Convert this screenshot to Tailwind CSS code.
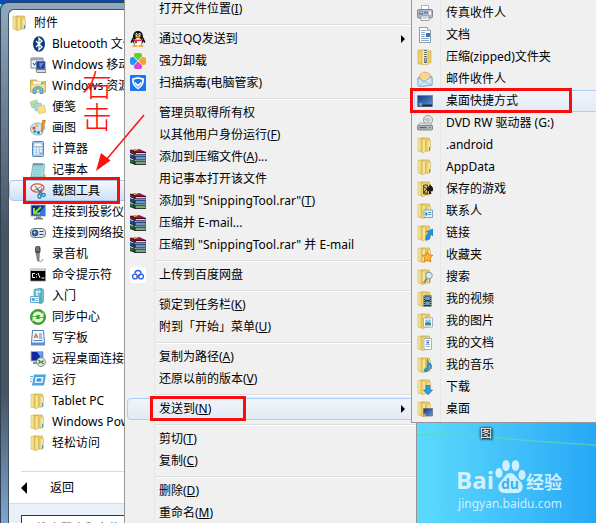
<!DOCTYPE html>
<html lang="zh-CN">
  <head>
    <meta charset="UTF-8" />
    <meta name="viewport" content="width=device-width, initial-scale=1.0" />
    <title>发送到桌面快捷方式</title>
    <script src="https://cdn.jsdelivr.net/npm/@tailwindcss/browser@4"></script>
  </head>
  <body
    class="relative h-screen overflow-hidden bg-linear-to-r from-[#5cdafc] from-70% to-[#25a8f6] font-['Noto_Sans','Noto_Sans_CJK_SC',sans-serif] text-xs text-black"
  >
    <!-- Shared icons -->
    <svg class="absolute size-0" aria-hidden="true">
      <defs>
        <linearGradient id="gold" x1="0" x2="1">
          <stop offset="0" stop-color="#fdf3b0" />
          <stop offset="1" stop-color="#d9b64c" />
        </linearGradient>
        <linearGradient id="screen" x1="0" x2="1" y2="1">
          <stop offset="0" stop-color="#16347e" />
          <stop offset="1" stop-color="#5a9be0" />
        </linearGradient>
      </defs>

      <symbol id="folder" viewBox="0 0 16 16">
        <path d="M4 1h8.5v13H4z" fill="#e9cf72" stroke="#cda944" stroke-width=".6" />
        <path d="M10 3l3.500.5V13L10 14z" fill="#f3e3a0" stroke="#cda944" stroke-width=".5" />
        <path d="M1 1.500l5-.5v14l-5-1z" fill="url(#gold)" stroke="#d2ae49" stroke-width=".6" />
        <path d="M5 2.500L8.500 1v13.500L5 16z" fill="#f6e391" stroke="#cda944" stroke-width=".6" />
        <path d="M12.500 10v3.500" stroke="#3f9fd8" stroke-width="1" />
      </symbol>
      <symbol id="bluetooth" viewBox="0 0 16 16">
        <ellipse cx="9" cy="8" rx="6" ry="7.800" fill="#0a3a7a" />
        <path d="M6 5l6 6-3 2.700V2.300L12 5l-6 6" fill="none" stroke="#fff" stroke-width="1.300" />
      </symbol>
      <symbol id="mobility" viewBox="0 0 16 16">
        <path d="M1 1h12v10H1z" fill="#f4f8fc" stroke="#728396" />
        <path d="M1 1h12v2.500H1z" fill="#93a8bd" />
        <path d="M3 6l1.500 2L7 4.500" fill="none" stroke="#2574b8" stroke-width="1.200" />
        <path d="M6.500 4.500h8.500v7.500H6.500z" fill="#1e3fa5" stroke="#6c7580" />
        <path d="M9 6h5l-4 5z" fill="#5f8fe8" />
        <path d="M6 12.500h9.500l.5 3H7z" fill="#d5d8dc" stroke="#555" stroke-width=".7" />
      </symbol>
      <symbol id="explorer" viewBox="0 0 16 16">
        <path d="M.5 2h6l1 1.500h8V14H.5z" fill="#e8c45c" stroke="#b79434" stroke-width=".7" />
        <path d="M3 3.500h10V7H3z" fill="#fff" />
        <path d="M11 4.200h2v2h-2z" fill="#55a855" />
        <path d="M.5 6h15l-.5 8H1z" fill="#f5e08e" stroke="#cfae50" stroke-width=".5" />
        <path d="M3 15.500V11q5-5 10 0v4.500h-3v-4q-2-2-4 0v4z" fill="#69bfe8" stroke="#2d84ba" stroke-width=".7" />
      </symbol>
      <symbol id="notes" viewBox="0 0 16 16">
        <path d="M0 3l7-2 2 6-7 2z" fill="#b9e08c" stroke="#8bbd60" stroke-width=".5" />
        <path d="M4 5l7-1 1 7-7 1z" fill="#a9d5f2" stroke="#6faedb" stroke-width=".5" />
        <path d="M7 7.500l7-1.500 2 7-7 2z" fill="#f6e287" stroke="#cfae45" stroke-width=".5" />
      </symbol>
      <symbol id="paint" viewBox="0 0 16 16">
        <path d="M8 3C3 3 .5 6 .5 9S3 15 8 15s5-2 4.500-3.500S15 10 15 8s-3-5-7-5z" fill="#cfe3f4" stroke="#5b8fb9" stroke-width=".7" />
        <circle cx="4" cy="8" r="1.600" fill="#e23e2e" />
        <circle cx="7" cy="5.500" r="1.500" fill="#f4b92c" />
        <circle cx="4.800" cy="11.500" r="1.500" fill="#3aa443" />
        <circle cx="8.500" cy="12.500" r="1.500" fill="#2c6fd0" />
        <path d="M12.500 0h3l-3 12-1.500-.5z" fill="#e59428" stroke="#9e5d13" stroke-width=".4" />
      </symbol>
      <symbol id="calc" viewBox="0 0 16 16">
        <rect x="2.500" y=".5" width="11" height="15" rx="1" fill="#a9cdee" stroke="#5487b8" />
        <path d="M4 2h8v3.500H4z" fill="#f3faff" stroke="#6a9ac8" stroke-width=".5" />
        <path d="M4 7.500h8M4 10h8M4 12.500h8" stroke="#fff" stroke-width="1.500" stroke-dasharray="1.700 1.300" />
        <path d="M10 12.500h2" stroke="#e28c2f" stroke-width="1.500" />
      </symbol>
      <symbol id="notepad" viewBox="0 0 16 16">
        <path d="M3 2h11.500l-1 13H1z" fill="#a6dbe2" stroke="#5f9ea8" stroke-width=".7" />
        <path d="M4 5h8M4 7.500h8M3.500 10h8M3 12.500h8" stroke="#7ebdc6" stroke-width=".7" />
        <path d="M4 1v2.500M6 1v2.500M8 1v2.500M10 1v2.500M12 1v2.500" stroke="#54646c" />
        <path d="M12.500 15.500l3-4v4z" fill="#d9b03c" />
      </symbol>
      <symbol id="snip" viewBox="0 0 16 16">
        <ellipse cx="7.500" cy="5" rx="6.500" ry="4.200" fill="#fff5f0" stroke="#cf5a3a" stroke-width="1.300" />
        <path d="M3 8l9-5M5 3l5 7" stroke="#8e9aa5" stroke-width="1.300" />
        <path d="M7 6l6 5M12 5l-3 7" stroke="#5c6d7c" stroke-width="1.200" />
        <ellipse cx="9.500" cy="13" rx="1.500" ry="2.200" fill="none" stroke="#2380b5" stroke-width="1.300" />
        <ellipse cx="13.500" cy="12" rx="1.800" ry="1.500" fill="none" stroke="#2380b5" stroke-width="1.300" />
      </symbol>
      <symbol id="projector" viewBox="0 0 16 16">
        <path d="M1 1h14.500v11H1z" fill="#14259c" stroke="#a9afb5" />
        <path d="M15 1.500v10H7z" fill="#3975e0" />
        <path d="M11 3L5 8.500M4 4v5.500h6" fill="none" stroke="#7fe03d" stroke-width="2" />
        <path d="M6 12.500h5v1.500h2v1.500H4V14h2z" fill="#777e85" />
      </symbol>
      <symbol id="netprojector" viewBox="0 0 16 16">
        <rect x=".5" y="3.500" width="15" height="9" rx="3.500" fill="#dfe5ea" stroke="#6f7b87" />
        <circle cx="5" cy="8" r="3" fill="#2e6bb0" stroke="#27384a" stroke-width=".8" />
        <circle cx="4.500" cy="7.500" r="1" fill="#c9ecff" />
        <path d="M9.500 6.500h4M9.500 9.500h4" stroke="#334a60" stroke-width="1.200" />
      </symbol>
      <symbol id="mic" viewBox="0 0 16 16">
        <rect x="5" y="0" width="5.500" height="7.500" rx="2.300" fill="#4b4f53" />
        <path d="M6 2h3M6 4h3" stroke="#aaafb4" stroke-width=".8" />
        <path d="M6 7.500h3.500L9 15H7.500z" fill="#868d93" stroke="#444" stroke-width=".4" />
        <path d="M8.500 15q4 1.500 4.500-2" fill="none" stroke="#888" stroke-width=".9" />
      </symbol>
      <symbol id="cmd" viewBox="0 0 16 16">
        <path d="M.5 2h15v12H.5z" fill="#000" stroke="#8b8f93" stroke-width=".8" />
        <path d="M.5 2h15v2H.5z" fill="#c8cdd2" />
        <path d="M5 6.500H2.500v4H5M6.500 7v1M6.500 9.500v1M8 6l2 5M11.500 11h3" fill="none" stroke="#fff" />
      </symbol>
      <symbol id="started" viewBox="0 0 16 16">
        <path d="M4 1.500L11 0l2.500 1.500V14L11 15.500 4 14z" fill="#70c2cf" stroke="#3791a4" stroke-width=".6" />
        <path d="M11 .7v14.600" stroke="#2f8496" stroke-width=".7" />
        <path d="M6 3h2v2H6zM8.500 2.700h2v2h-2zM6 5.500h2v2H6z" fill="#dff6fa" />
        <path d="M.5 8.500h9v6h-9z" fill="#eef8fd" stroke="#4b97c2" stroke-width=".8" />
        <path d="M2 10.500h2.500v2H2zM5.500 10.500h3M5.500 12.500h3" fill="#4ea5d8" stroke="#4ea5d8" stroke-width=".7" />
      </symbol>
      <symbol id="sync" viewBox="0 0 16 16">
        <circle cx="8" cy="8" r="7.600" fill="#3aa53c" stroke="#1f7f28" stroke-width=".7" />
        <path d="M2.500 7q1-4.500 5.500-4.500 2.500 0 4 2l1.500-1V8H9l1.500-1.500Q8 4.500 5 7.500zM13.500 9q-1 4.500-5.500 4.500-2.500 0-4-2l-1.500 1V8H7L5.500 9.500Q8 11.500 11 8.500z" fill="#e4f9c4" />
      </symbol>
      <symbol id="wordpad" viewBox="0 0 16 16">
        <path d="M2.500.5h11l1 12.500h-13z" fill="#f3f9ff" stroke="#4b80b8" />
        <path d="M1 13h14v2.500H1z" fill="#5b90c6" />
        <path d="M4 8l2-4 2 4M4.800 7h2.500" fill="none" stroke="#e06a2b" stroke-width="1.200" />
        <path d="M9 4h3M9 6h3M9 8h3.500M3.500 10.500h9" stroke="#3f75b0" stroke-width=".9" />
      </symbol>
      <symbol id="rdp" viewBox="0 0 16 16">
        <path d="M1 .5h12v9.500H1z" fill="#1228a0" stroke="#aab0b6" />
        <path d="M7 1h5.500v8z" fill="#6a9af0" />
        <path d="M3 11h5v2H3z" fill="#868c92" />
        <circle cx="11" cy="11" r="4.500" fill="#dfe5df" stroke="#6d7a70" stroke-width=".8" />
        <path d="M8.500 9l2 1.800-2 1.800M13.500 9.500l-2 1.800 2 1.800" fill="none" stroke="#2a8a2f" stroke-width="1.200" />
      </symbol>
      <symbol id="run" viewBox="0 0 16 16">
        <path d="M4 2.500h12l-2 11H2z" fill="#4aa3e2" />
        <path d="M5.500 5h8l-1 6h-8z" fill="#dff1fd" />
        <path d="M7 6.500h4.500l-.5 3H6.500z" fill="#3c8fd3" />
        <path d="M0 4.500h3M0 7h2.500M0 9.500h2" stroke="#69b8ea" />
      </symbol>

      <symbol id="qq" viewBox="0 0 16 16">
        <path d="M3 6C3 2 5 0 8 0s5 2 5 6l2.500 5-1 1-1.500-1.500q-.5 4-5 4t-5-4L1.500 12l-1-1z" fill="#111" />
        <ellipse cx="8" cy="11" rx="3.800" ry="4" fill="#fff" />
        <ellipse cx="6.500" cy="3.500" rx="1.100" ry="1.500" fill="#fff" />
        <ellipse cx="9.500" cy="3.500" rx="1.100" ry="1.500" fill="#fff" />
        <circle cx="6.800" cy="3.700" r=".5" /><circle cx="9.200" cy="3.700" r=".5" />
        <ellipse cx="8" cy="5.800" rx="2.800" ry="1" fill="#f7a51c" />
        <path d="M3 7.500q5 2.500 10 0v1.800q-3 1.200-6 1v2H4.800V9.800L3 9z" fill="#e5252a" />
        <ellipse cx="5" cy="15" rx="2.800" ry="1" fill="#f4a21a" />
        <ellipse cx="11" cy="15" rx="2.800" ry="1" fill="#f4a21a" />
      </symbol>
      <symbol id="clover" viewBox="0 0 16 16">
        <path d="M8 7.500L4 3.500Q3.500 0 6 0h4q2.500 0 2 3.500z" fill="#67cf2c" />
        <path d="M8.500 8l4-4Q16 3.500 16 6v4q0 2.500-3.500 2z" fill="#f7a326" />
        <path d="M8 8.500l4 4q.5 3.500-2 3.500H6q-2.500 0-2-3.500z" fill="#d845d5" />
        <path d="M7.500 8l-4-4Q0 3.500 0 6v4q0 2.500 3.500 2z" fill="#2b94f2" />
      </symbol>
      <symbol id="shield" viewBox="0 0 16 16">
        <rect width="16" height="16" rx="1" fill="#1d74f2" />
        <path d="M8 2l6 1.500q.5 7-6 11-6.500-4-6-11z" fill="#fff" />
        <path d="M8 3.800l4.300 1q0 5-4.300 8-4.300-3-4.300-8z" fill="#1d74f2" />
        <path d="M4.500 6.500L8 9.500l3.500-3v2L8 12 4.500 8.500z" fill="#fff" />
      </symbol>
      <symbol id="rar" viewBox="0 0 16 16">
        <path d="M0 1L9 0l7 3v2.500H6L0 3.500z" fill="#8e1550" />
        <path d="M0 1l6 2.500h10" fill="none" stroke="#4a0625" />
        <path d="M6 4h9.500v1H6z" fill="#f3c3d8" />
        <path d="M0 5l6 2h10v3.500H6L0 8.500z" fill="#16509c" />
        <path d="M6 8.500h9.500v1H6z" fill="#b5def5" />
        <path d="M0 10l6 2h10v3.500H6L0 13.500z" fill="#13703e" />
        <path d="M6 13.500h9.500v1H6z" fill="#c5eccb" />
        <path d="M0 3.500L6 6h10M0 8.500L6 11h10M0 13.500l6 2.200h10" fill="none" stroke="#111" stroke-width=".9" />
        <path d="M3 1l2 .7v14L3 15z" fill="#33252a" fill-opacity=".6" />
        <path d="M4 1.500l4-1" stroke="#f2d32d" />
      </symbol>
      <symbol id="netdisk" viewBox="0 0 16 16">
        <rect width="16" height="16" rx="3" fill="#fff" />
        <circle cx="5" cy="9.500" r="2.400" fill="none" stroke="#2468f2" stroke-width="1.400" />
        <circle cx="11" cy="9.500" r="2.400" fill="none" stroke="#2468f2" stroke-width="1.400" />
        <path d="M5 6.500Q5 3.500 8 3.500t3 3Q11 8 8 9.500" fill="none" stroke="#2468f2" stroke-width="1.400" />
        <circle cx="7.500" cy="9.500" r="1" fill="#ef3b3b" />
      </symbol>

      <symbol id="fax" viewBox="0 0 16 16">
        <path d="M4.500.5h7v5h-7z" fill="#fff" stroke="#8f969c" stroke-width=".7" />
        <rect x=".5" y="4.500" width="15" height="8.500" rx="1.500" fill="#b7bdc3" stroke="#686f76" stroke-width=".8" />
        <path d="M2 6.500h4v3H2z" fill="#59616a" />
        <path d="M7 6.500h4v2H7z" fill="#3c8fd6" />
        <path d="M12 6.500h2v3h-2z" fill="#f6f8fa" />
        <path d="M2 7.500h4M4 6.500v3" stroke="#dfe4e8" stroke-width=".6" />
        <path d="M4 11h8v4.500H4z" fill="#fff" stroke="#7c838a" stroke-width=".7" />
        <path d="M5.500 13h5" stroke="#8aa9c6" />
      </symbol>
      <symbol id="doc" viewBox="0 0 16 16">
        <path d="M2.500.5h8l3 3v12h-11z" fill="#fff" stroke="#8292a2" stroke-width=".9" />
        <path d="M10.500.5v3h3" fill="#dce5ee" stroke="#8292a2" stroke-width=".7" />
        <path d="M4 3.500h5M4 5.500h4M4 7.500h4M4 9.500h4M4 11.500h8M4 13.500h8" stroke="#6f95be" stroke-width=".8" />
        <path d="M9 6h4v4H9z" fill="#2b7cc8" />
      </symbol>
      <symbol id="zip" viewBox="0 0 16 16">
        <path d="M1 1h5v14H1zM10 2h4v12h-4z" fill="#ecd06a" stroke="#c9a43c" stroke-width=".6" />
        <path d="M5 1h6v14.500H5z" fill="#f9eda8" stroke="#c9a43c" stroke-width=".6" />
        <path d="M8.500 1v13" stroke="#4f5963" stroke-width="2.500" stroke-dasharray="1 1" />
        <path d="M7.500 9h2v4h-2z" fill="#a8b0b8" stroke="#4f5963" stroke-width=".5" />
      </symbol>
      <symbol id="mail" viewBox="0 0 16 16">
        <path d="M1 7l7-6 7 5v8l-12 1.500-2-1z" fill="#8bc5ea" stroke="#5a97c2" stroke-width=".7" />
        <path d="M3 3q6-3.500 10 0v6l-6 2-4-3z" fill="#fbd595" stroke="#e2a24a" stroke-width=".6" />
        <path d="M1 7l6 3.500L15 6v8L2.500 15.500 1 14z" fill="#cfe9f9" stroke="#6ea7cf" stroke-width=".7" />
        <path d="M2 15l5-4.500L15 14" fill="none" stroke="#78afd4" stroke-width=".7" />
      </symbol>
      <symbol id="desktop" viewBox="0 0 16 16">
        <path d="M.5 2.500h15v11H.5z" fill="url(#screen)" stroke="#7b8794" stroke-width=".9" />
        <path d="M1 11.500h14v2H1z" fill="#262b35" />
        <circle cx="3.500" cy="11.500" r="2" fill="#3f9ae6" />
        <path d="M3 10.500h1v1H3z" fill="#f5b03d" />
      </symbol>
      <symbol id="dvd" viewBox="0 0 16 16">
        <circle cx="11" cy="5" r="4.600" fill="#dfe3e5" stroke="#8b9196" stroke-width=".8" />
        <circle cx="11" cy="5" r="1.300" fill="#fff" stroke="#777" stroke-width=".6" />
        <path d="M6.500 4.500l3-.5" stroke="#9bc79a" />
        <path d="M2.500 8h11l2 3H.5z" fill="#d7dadd" fill-opacity=".85" stroke="#878d92" stroke-width=".6" />
        <rect x=".5" y="10.500" width="15" height="4.500" rx="1" fill="#b1b6ba" stroke="#6d7378" stroke-width=".8" />
        <path d="M2.500 12.700h7" stroke="#474c51" />
        <path d="M12 12.700h2" stroke="#39c239" stroke-width="1.300" />
      </symbol>

      <!-- Badges drawn over the folder -->
      <symbol id="b-games" viewBox="0 0 16 16">
        <path d="M6.500 4h4v9h-4z" fill="#d8b878" stroke="#3b2b18" stroke-width=".8" />
        <path d="M7 6l3 2-3 3 3 2" fill="none" stroke="#3b2b18" />
        <path d="M13 3.500q4 3.500 3 6-1 1.500-2.300.5l.8 3h-3l.8-3Q10.500 11 10 9q0-2 3-5.500z" fill="#1d1a18" />
      </symbol>
      <symbol id="b-contact" viewBox="0 0 16 16">
        <path d="M7 7h8.500v7.500H7z" fill="#e4f3fc" stroke="#5f93ba" stroke-width=".8" />
        <path d="M8.300 9.500h2v3h-2z" fill="#357fb8" />
        <path d="M11.300 9.500h3M11.300 11.500h3" stroke="#4e92c6" />
      </symbol>
      <symbol id="b-link" viewBox="0 0 16 16">
        <path d="M9 15.500q-1-5 2.500-7.500L9.500 6.500 16 4v7l-2-1.500Q12 12 12.500 14z" fill="#2196e3" stroke="#1470b5" stroke-width=".6" />
      </symbol>
      <symbol id="b-star" viewBox="0 0 16 16">
        <path d="M10.500 4.500l1.500 3.400 4 .4-2.900 2.600.8 4.100-3.400-2.100L7 15l.9-4.100L5.500 8.300l3.600-.4z" fill="#fdb62b" stroke="#d9761a" stroke-width=".8" />
      </symbol>
      <symbol id="b-search" viewBox="0 0 16 16">
        <path d="M10 9.500L6.500 14" stroke="#7b858e" stroke-width="1.800" />
        <circle cx="12" cy="6.500" r="3.300" fill="#d6ecfb" stroke="#8997a4" />
      </symbol>
      <symbol id="b-video" viewBox="0 0 16 16">
        <path d="M6.500 4.500h8v11h-8z" fill="#2a323a" />
        <path d="M8.300 5.500h4.500V9H8.300zM8.300 10.500h4.500V14H8.300z" fill="#58abd8" />
        <path d="M7.300 5v10M13.800 5v10" stroke="#e8edf0" stroke-width=".8" stroke-dasharray="1 1" />
      </symbol>
      <symbol id="b-picture" viewBox="0 0 16 16">
        <path d="M6.500 5h9v9h-9z" fill="#fff" stroke="#8597a6" stroke-width=".7" />
        <path d="M8 6.500h6v3H8z" fill="#8fc9ee" />
        <path d="M8 12.500V10q3-2 6 0v2.500z" fill="#3f8f86" />
      </symbol>
      <symbol id="b-doc" viewBox="0 0 16 16">
        <path d="M7 3.500h7.500v11H7z" fill="#fff" stroke="#8597a6" stroke-width=".7" />
        <path d="M8.500 5.500h4.500M8.500 9.500h4.500M8.500 11.500h4.500" stroke="#7f9fc2" stroke-width=".8" />
        <path d="M9.500 6.500h2.500v2H9.500z" fill="#2b7cc8" />
      </symbol>
      <symbol id="b-music" viewBox="0 0 16 16">
        <path d="M10.500 2q0 3 3 4.500 2 2 .5 5.500 0-3-2.500-4v4.500q-.5 2.500-3 2.500-2 0-1.500-2 .6-2 3-2z" fill="#2196e3" stroke="#1470b5" stroke-width=".5" />
      </symbol>
      <symbol id="b-down" viewBox="0 0 16 16">
        <path d="M9 6.500h4V11h2.500L11 15.800 6.500 11H9z" fill="#29a0ec" stroke="#1470b5" stroke-width=".7" />
      </symbol>
      <symbol id="b-desktop" viewBox="0 0 16 16">
        <path d="M6.500 7.500h9v7.500h-9z" fill="url(#screen)" stroke="#667" stroke-width=".7" />
        <circle cx="7.500" cy="14" r="1.500" fill="#e9933a" />
      </symbol>
    </svg>

    <!-- Desktop behind the menus -->
    <div class="absolute inset-x-0 top-0 h-1 bg-[#0b49b5]"></div>
    <svg class="absolute right-0 top-[432px] h-5 w-[180px]" viewBox="0 0 180 20" fill="none">
      <path d="M0 3Q50 2 85 6T180 13" stroke="#5fd9b0" stroke-opacity=".7" stroke-width="1.500" />
    </svg>
    <span
      class="absolute left-[480px] top-[426px] text-xs leading-4 text-white [text-shadow:0_0_2px_#000,1px_1px_2px_#000,0_0_3px_#000]"
      >图</span
    >

    <!-- Watermark -->
    <div class="absolute right-[34px] top-[460px] text-white/75">
      <div class="flex h-[34px] items-end">
        <span class="font-['Open_Sans'] text-2xl leading-7 font-bold">Bai</span>
        <span class="relative h-[34px] w-8">
          <svg class="h-full w-full" viewBox="0 0 32 34" fill="currentColor">
            <ellipse cx="5" cy="13" rx="3.600" ry="5" />
            <ellipse cx="12" cy="5.500" rx="3.800" ry="5.500" />
            <ellipse cx="21.500" cy="5.500" rx="3.800" ry="5.500" />
            <ellipse cx="28" cy="15" rx="3.600" ry="5" />
            <path d="M16.500 13c4 0 5.500 4 8 6.500s5 4.500 4 9-5 5-12 4.500c-7 .5-11 0-12-4.500s2-6.500 4-9S12.500 13 16.500 13z" />
          </svg>
          <span class="absolute inset-x-0 bottom-0.5 text-center text-sm leading-4 font-bold text-[#3bb2f0]">du</span>
        </span>
        <span class="text-lg leading-6 font-bold">经验</span>
      </div>
      <div class="text-right text-xs leading-5">jingyan.baidu.com</div>
    </div>

    <!-- Start menu -->
    <section
      class="absolute bottom-0 left-0 top-0.5 flex w-[210px] flex-col rounded-tl-lg border-l border-t border-[#2d3f52] bg-[linear-gradient(#90a9c1,#6d8093_20%,#465461_45%,#465461_75%,#80a5d0)] pl-[7px] pt-[6px]"
    >
      <div class="flex-1 rounded-tl-md border-l border-t border-[#3f5162] bg-[#e9f0fa]">
        <div class="rounded-tl-md bg-white pt-0.5">
          <ul id="programList"></ul>
          <div class="mt-[18px] pl-3">
            <button class="flex h-8 w-full items-center border-t border-[#c9dcf1] text-left">
              <svg class="h-3 w-1.5" viewBox="0 0 6 12"><path d="M6 0v12L0 6z" /></svg>
              <span class="pl-[23px]">返回</span>
            </button>
          </div>
        </div>
        <div class="border-t border-[#cbdcf0] pl-3 pt-[11px]">
          <input
            type="text"
            aria-label="搜索程序和文件"
            placeholder="搜索程序和文件"
            class="h-6 w-full border border-[#33373c] bg-white px-3 text-xs italic placeholder:text-[#666]"
          />
        </div>
      </div>
    </section>

    <!-- Context menu -->
    <ul
      id="contextMenu"
      class="absolute -bottom-1 -top-0.5 left-[124px] w-[293px] border-x border-[#979797] bg-[#f0f0f0] bg-linear-to-r from-[#f0f0f0] from-[29px] via-[#dcdddd] via-[29px] to-[#f0f0f0] to-[30px] pl-0.5"
    ></ul>

    <!-- Send-to submenu -->
    <ul
      id="sendToMenu"
      class="absolute -right-1 -top-px left-[411px] border border-[#979797] bg-[#f0f0f0] bg-linear-to-r from-[#f0f0f0] from-[28px] via-[#dcdddd] via-[28px] to-[#f0f0f0] to-[29px] py-0.5 pl-0.5"
    ></ul>

    <!-- Hand-made notes -->
    <div
      class="pointer-events-none absolute left-[82px] top-[67px] flex w-8 flex-col font-['Noto_Sans_CJK_SC',sans-serif] text-3xl leading-8 font-light text-[#f11]"
    >
      <span>右</span>
      <span>击</span>
    </div>
    <svg class="pointer-events-none absolute left-[92px] top-[112px] h-[62px] w-14" viewBox="0 0 56 62">
      <path d="M52 3L14 48" stroke="#f11" stroke-width="1.500" />
      <path d="M4 59L9 41l9.500 7.500z" fill="#f11" />
    </svg>

    <script>
      const programs = [
        ["bluetooth", "Bluetooth 文件传输"],
        ["mobility", "Windows 移动中心"],
        ["explorer", "Windows 资源管理器"],
        ["notes", "便笺"],
        ["paint", "画图"],
        ["calc", "计算器"],
        ["notepad", "记事本"],
        ["snip", "截图工具"],
        ["projector", "连接到投影仪"],
        ["netprojector", "连接到网络投影仪"],
        ["mic", "录音机"],
        ["cmd", "命令提示符"],
        ["started", "入门"],
        ["sync", "同步中心"],
        ["wordpad", "写字板"],
        ["rdp", "远程桌面连接"],
        ["run", "运行"],
        ["folder", "Tablet PC"],
        ["folder", "Windows PowerShell"],
        ["folder", "轻松访问"],
      ];

      // null is a separator; third value is the access key
      const contextItems = [
        ["", "打开文件位置", "I"],
        null,
        ["qq", "通过QQ发送到"],
        ["clover", "强力卸载"],
        ["shield", "扫描病毒(电脑管家)"],
        null,
        ["", "管理员取得所有权"],
        ["", "以其他用户身份运行", "F"],
        ["rar", "添加到压缩文件", "A", "..."],
        ["", "用记事本打开该文件"],
        ["rar", '添加到 "SnippingTool.rar"', "T"],
        ["rar", "压缩并 E-mail..."],
        ["rar", '压缩到 "SnippingTool.rar" 并 E-mail'],
        null,
        ["netdisk", "上传到百度网盘"],
        null,
        ["", "锁定到任务栏", "K"],
        ["", "附到「开始」菜单", "U"],
        null,
        ["", "复制为路径", "A"],
        ["", "还原以前的版本", "V"],
        null,
        ["", "发送到", "N"],
        null,
        ["", "剪切", "T"],
        ["", "复制", "C"],
        null,
        ["", "删除", "D"],
        ["", "重命名", "M"],
      ];

      // third value is the badge over a folder
      const targets = [
        ["fax", "传真收件人"],
        ["doc", "文档"],
        ["zip", "压缩(zipped)文件夹"],
        ["mail", "邮件收件人"],
        ["desktop", "桌面快捷方式"],
        ["dvd", "DVD RW 驱动器 (G:)"],
        ["folder", ".android"],
        ["folder", "AppData"],
        ["folder", "保存的游戏", "b-games"],
        ["folder", "联系人", "b-contact"],
        ["folder", "链接", "b-link"],
        ["folder", "收藏夹", "b-star"],
        ["folder", "搜索", "b-search"],
        ["folder", "我的视频", "b-video"],
        ["folder", "我的图片", "b-picture"],
        ["folder", "我的文档", "b-doc"],
        ["folder", "我的音乐", "b-music"],
        ["folder", "下载", "b-down"],
        ["folder", "桌面", "b-desktop"],
      ];

      function icon(name, badge) {
        const use = name ? `<use href="#${name}"/>` : "";
        const over = badge ? `<use href="#${badge}"/>` : "";
        return `<svg class="size-4 shrink-0" viewBox="0 0 16 16">${use}${over}</svg>`;
      }

      const arrow =
        '<svg class="ml-auto mr-[10px] h-2 w-1" viewBox="0 0 4 8"><path d="M0 0v8l4-4z"/></svg>';

      // Start menu programs
      document.getElementById("programList").innerHTML =
        `<li><button class="flex h-[21px] w-full items-center gap-1.5 pl-[3px]">${icon("folder")}<span>附件</span></button></li>` +
        programs
          .map(([name, label]) => {
            const active = name === "snip";
            const state = active
              ? "rounded-sm border-[#aac8ee] bg-linear-to-b from-[#f4f8fe] to-[#cfe0f7]"
              : "border-transparent";
            const mark = active
              ? '<span class="pointer-events-none absolute -inset-y-[3px] left-3.5 w-[97px] border-3 border-[#f80c0c]"></span>'
              : "";
            return `<li class="relative"><button class="flex h-[21px] w-full items-center gap-1.5 whitespace-nowrap border pl-5 ${state}">${icon(name)}<span>${label}</span></button>${mark}</li>`;
          })
          .join("");

      // Context menu
      document.getElementById("contextMenu").innerHTML = contextItems
        .map((item) => {
          if (!item) {
            return '<li class="ml-7 h-2 pt-1"><div class="h-0.5 border-t border-[#dcdddd] bg-white"></div></li>';
          }
          const [name, label, key, tail] = item;
          const active = label === "发送到";
          const state = active
            ? "rounded-sm border-[#aecff7] bg-linear-to-b from-[#f1f4f9] to-[#e4ebf5]"
            : "border-transparent";
          const mark = active
            ? '<span class="pointer-events-none absolute -top-0.5 left-[23px] h-[25px] w-24 border-3 border-[#f80c0c]"></span>'
            : "";
          const access = key ? `(<u class="underline-offset-1">${key}</u>)` : "";
          const more = active || name === "qq" ? arrow : "";
          return `<li class="relative"><button class="flex h-[22px] w-full items-center gap-[13px] whitespace-nowrap border pl-0.5 ${state}">${icon(name)}<span>${label}${access}${tail || ""}</span>${more}</button>${mark}</li>`;
        })
        .join("");

      // Send-to targets
      document.getElementById("sendToMenu").innerHTML = targets
        .map(([name, label, badge]) => {
          const active = name === "desktop";
          const state = active
            ? "rounded-sm border-[#aecff7] bg-linear-to-b from-[#f1f4f9] to-[#e4ebf5]"
            : "border-transparent";
          const mark = active
            ? '<span class="pointer-events-none absolute -top-0.5 -left-1 h-[25px] w-[162px] border-3 border-[#f80c0c]"></span>'
            : "";
          return `<li class="relative"><button class="flex h-[22px] w-full items-center gap-[13px] whitespace-nowrap border pl-0.5 ${state}">${icon(name, badge)}<span>${label}</span></button>${mark}</li>`;
        })
        .join("");
    </script>
  </body>
</html>
